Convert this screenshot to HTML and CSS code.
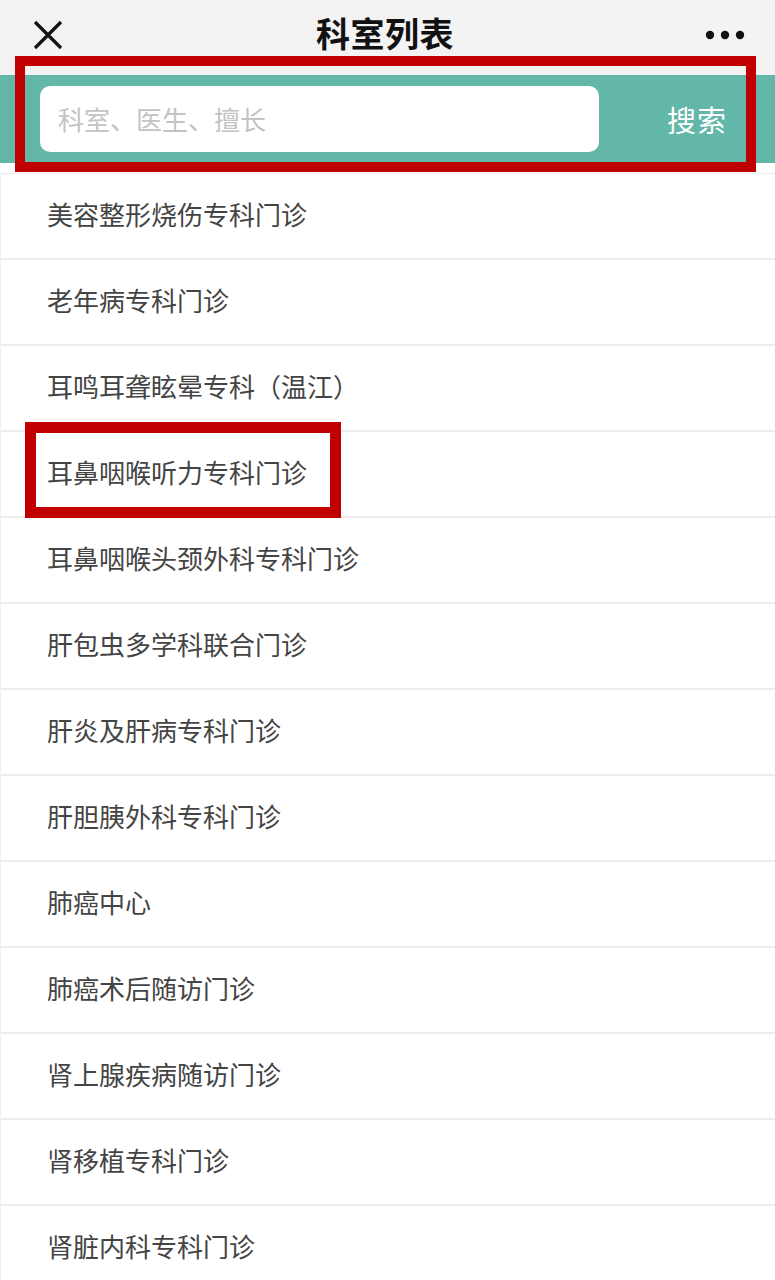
FILE: index.html
```html
<!DOCTYPE html>
<html lang="zh-CN">
<head>
<meta charset="utf-8">
<title>科室列表</title>
<link rel="stylesheet" href="styles.css">
</head>
<body>
<div class="page">
  <header class="topbar">
    <svg class="close" width="30" height="30" viewBox="0 0 30 30"><path d="M2 2 L28 28 M28 2 L2 28" stroke="#111" stroke-width="3.2" stroke-linecap="butt" fill="none"/></svg>
    <h1 class="title">科室列表</h1>
    <svg class="more" width="40" height="10" viewBox="0 0 40 10"><circle cx="5" cy="5" r="4.2" fill="#111"/><circle cx="20" cy="5" r="4.2" fill="#111"/><circle cx="35" cy="5" r="4.2" fill="#111"/></svg>
  </header>
  <div class="searchbar">
    <div class="input">科室、医生、擅长</div>
    <div class="search-btn">搜索</div>
  </div>
  <ul class="list">
    <li class="row">美容整形烧伤专科门诊</li>
    <li class="row">老年病专科门诊</li>
    <li class="row">耳鸣耳聋眩晕专科（温江）</li>
    <li class="row">耳鼻咽喉听力专科门诊</li>
    <li class="row">耳鼻咽喉头颈外科专科门诊</li>
    <li class="row">肝包虫多学科联合门诊</li>
    <li class="row">肝炎及肝病专科门诊</li>
    <li class="row">肝胆胰外科专科门诊</li>
    <li class="row">肺癌中心</li>
    <li class="row">肺癌术后随访门诊</li>
    <li class="row">肾上腺疾病随访门诊</li>
    <li class="row">肾移植专科门诊</li>
    <li class="row">肾脏内科专科门诊</li>
  </ul>
  <div class="mark mark-search"></div>
  <div class="mark mark-row"></div>
</div>
</body>
</html>
```

FILE: styles.css
```css
* { box-sizing: border-box; }
html, body { margin: 0; padding: 0; }
body {
  background: #ffffff;
  font-family: "Noto Sans CJK SC", "Noto Sans", sans-serif;
  overflow: hidden;
}
.page {
  position: relative;
  width: 775px;
  height: 1280px;
  overflow: hidden;
}
.topbar {
  height: 75px;
  background: #f3f3f3;
  display: flex;
  align-items: flex-start;
  justify-content: space-between;
  padding: 20px 30px 0 33px;
}
.close { display: block; }
.title {
  margin: -8px 0 0 2px;
  font-size: 34px;
  font-weight: 700;
  color: #111;
  line-height: 42px;
  letter-spacing: 0.5px;
}
.more { display: block; margin-top: 10px; }
.searchbar {
  height: 88px;
  background: #62b7a8;
  display: flex;
  align-items: center;
  padding-left: 40px;
}
.input {
  width: 559px;
  height: 66px;
  background: #fff;
  border-radius: 10px;
  color: #c3c3c3;
  font-size: 26px;
  line-height: 66px;
  padding-left: 18px;
}
.search-btn {
  flex: 1;
  color: #fff;
  font-size: 29px;
  padding-left: 68px;
  line-height: 66px;
  letter-spacing: 1px;
}
.list {
  list-style: none;
  margin: 10px 0 0 0;
  padding: 0;
  border-top: 1px solid #ececec;
  border-left: 1px solid #f0f0f0;
}
.row {
  height: 86px;
  border-bottom: 2px solid #ececec;
  display: flex;
  align-items: center;
  padding: 0 0 5px 46px;
  font-size: 26px;
  color: #444;
}
.mark {
  position: absolute;
  border-style: solid;
  border-color: #c00000;
}
.mark-search {
  left: 15px;
  top: 56px;
  width: 741px;
  height: 116px;
  border-width: 10px;
}
.mark-row {
  left: 25px;
  top: 422px;
  width: 316px;
  height: 96px;
  border-width: 11px;
}
```
